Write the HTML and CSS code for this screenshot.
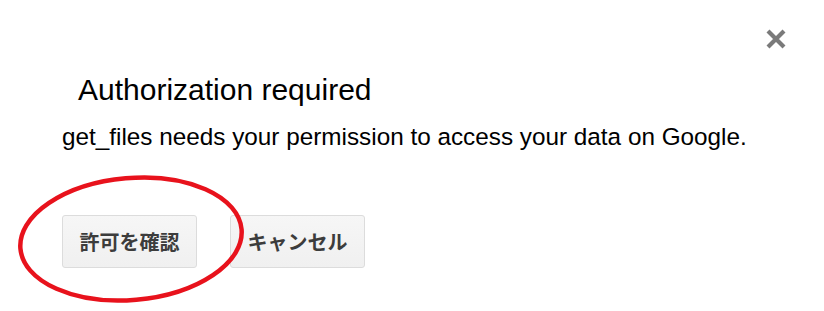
FILE: index.html
```html
<!DOCTYPE html>
<html lang="en">
<head>
<meta charset="utf-8">
<title>Authorization required</title>
<link rel="stylesheet" href="styles.css">
</head>
<body>
<div class="dialog">
  <div class="close-row">
    <button class="close" aria-label="Close">
      <svg width="20" height="20" viewBox="0 0 20 20"><path d="M2 2 L18 18 M18 2 L2 18" stroke="#7a7a7a" stroke-width="4.2" fill="none"/></svg>
    </button>
  </div>
  <h1 class="title">Authorization required</h1>
  <p class="message">get_files needs your permission to access your data on Google.</p>
  <div class="actions">
    <button class="btn">許可を確認</button>
    <button class="btn">キャンセル</button>
    <svg class="circle" width="236" height="140" viewBox="0 0 236 140"><ellipse cx="118" cy="70" rx="111" ry="61" transform="rotate(-5 118 70)" fill="none" stroke="#e8121c" stroke-width="4.5"/></svg>
  </div>
</div>
</body>
</html>
```
FILE: styles.css
```css
html, body {
  margin: 0;
  padding: 0;
  background: #fff;
}
.dialog {
  display: flex;
  flex-direction: column;
  width: 824px;
  height: 311px;
  font-family: "Liberation Sans", Arial, sans-serif;
  color: #000;
}
.close-row {
  display: flex;
  justify-content: flex-end;
  padding: 29px 38px 0 0;
}
.close {
  width: 20px;
  height: 20px;
  padding: 0;
  border: 0;
  background: none;
  display: block;
  filter: blur(0.4px);
}
.close svg { display: block; }
.title {
  margin: 24px 0 0 78px;
  font-size: 30px;
  line-height: 34px;
  font-weight: normal;
}
.message {
  margin: 16px 0 0 62px;
  font-size: 24.3px;
  line-height: 28px;
}
.actions {
  position: relative;
  display: flex;
  gap: 33px;
  margin: 64px 0 0 62px;
}
.btn {
  height: 53px;
  box-sizing: border-box;
  padding: 0 16.5px;
  border: 1px solid #dcdcdc;
  border-radius: 3px;
  background: linear-gradient(#f6f6f6, #f0f0f0);
  color: #3c3c3c;
  font-family: "Noto Sans CJK JP", "Liberation Sans", sans-serif;
  font-weight: bold;
  font-size: 20px;
  line-height: 51px;
}
.circle {
  position: absolute;
  left: -49px;
  top: -46px;
  pointer-events: none;
}
```
